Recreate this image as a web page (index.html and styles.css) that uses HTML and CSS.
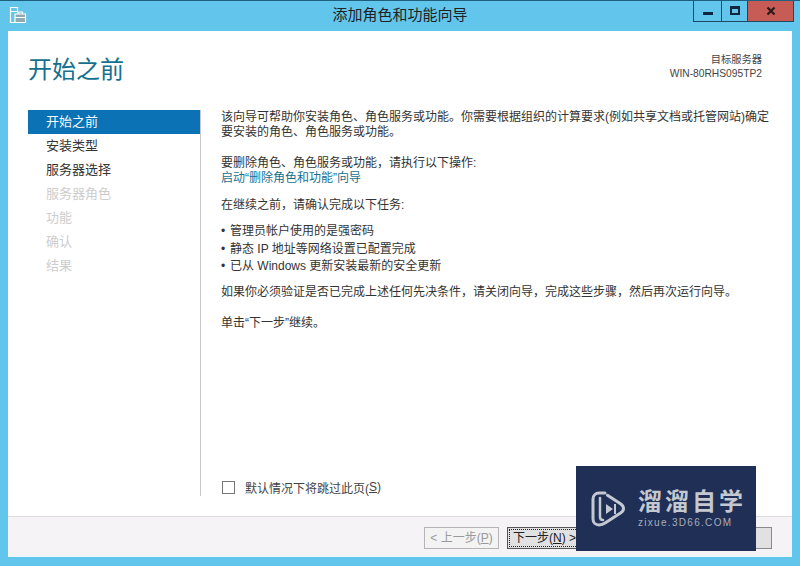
FILE: index.html
```html
<!DOCTYPE html>
<html lang="zh-CN">
<head>
  <meta charset="UTF-8">
  <meta name="viewport" content="width=800, initial-scale=1.0">
  <title>添加角色和功能向导</title>
  <link rel="stylesheet" href="styles.css">
</head>
<body>
  <div class="window">
    <div class="titlebar">
      <svg class="app-icon" width="18" height="18" viewBox="0 0 18 18">
        <path d="M1.500 1.500h7v4h-7zM1.500 5.500v11h5" fill="none" stroke="#fff" stroke-width="1.200"/>
        <path d="M6 8h10.500v8.500h-10.500z" fill="#8fa9b0" stroke="#fff" stroke-width="1.200"/>
        <path d="M9 8V6h4.500v2M6 11.500h10.500" fill="none" stroke="#fff" stroke-width="1.200"/>
      </svg>
      <div class="title">添加角色和功能向导</div>
      <div class="controls">
        <div class="ctl ctl-first"><span class="ctl-min"></span></div>
        <div class="ctl"><span class="ctl-max"></span></div>
        <div class="ctl ctl-close">
          <svg width="10" height="10" viewBox="0 0 10 10"><path d="M1.500 1.500l7 7M8.500 1.500l-7 7" stroke="#2b1a1a" stroke-width="2.200" fill="none"/></svg>
        </div>
      </div>
    </div>

    <div class="client">
      <div class="head">
        <h1>开始之前</h1>
        <div class="server">
          <div>目标服务器</div>
          <div>WIN-80RHS095TP2</div>
        </div>
      </div>

      <div class="main">
        <ul class="steps">
          <li class="active">开始之前</li>
          <li>安装类型</li>
          <li>服务器选择</li>
          <li class="off">服务器角色</li>
          <li class="off">功能</li>
          <li class="off">确认</li>
          <li class="off">结果</li>
        </ul>

        <div class="content">
          <div class="body-text">
            <p class="p1">该向导可帮助你安装角色、角色服务或功能。你需要根据组织的计算要求(例如共享文档或托管网站)确定要安装的角色、角色服务或功能。</p>
            <p class="p2">要删除角色、角色服务或功能，请执行以下操作:<br><a href="#">启动“删除角色和功能”向导</a></p>
            <p class="p3">在继续之前，请确认完成以下任务:</p>
            <ul class="tasks">
              <li>管理员帐户使用的是强密码</li>
              <li>静态 IP 地址等网络设置已配置完成</li>
              <li>已从 Windows 更新安装最新的安全更新</li>
            </ul>
            <p class="p4">如果你必须验证是否已完成上述任何先决条件，请关闭向导，完成这些步骤，然后再次运行向导。</p>
            <p class="p5">单击“下一步”继续。</p>
          </div>
          <label class="skip"><span class="box"></span>默认情况下将跳过此页(<u>S</u>)</label>
        </div>
      </div>

      <div class="footer">
        <button class="btn" disabled>&lt; 上一步(<u>P</u>)</button>
        <button class="btn btn-next">下一步(<u>N</u>) &gt;</button>
        <button class="btn btn-plain" disabled></button>
        <button class="btn btn-plain btn-last" disabled></button>
      </div>
    </div>

    <div class="mark">
      <svg class="mark-logo" width="35" height="36" viewBox="0 0 35 36">
        <path d="M14 2h-6c-3.500 0-6 2.500-6 6v20c0 3.500 2.500 6 6 6 2.500 0 4.500-.8 6.500-2.200l15-9.800c4-2.700 4-6.500 0-9.200l-13-8.500" fill="none" stroke="#c4c8d0" stroke-width="3" stroke-linecap="round"/>
        <path d="M9 7v19c0 2 1 3 3 3" fill="none" stroke="#c4c8d0" stroke-width="2.500" stroke-linecap="round"/>
        <path d="M15 13l7 5-7 5zM23 13h2v10h-2z" fill="#c4c8d0"/>
      </svg>
      <div class="mark-text">
        <div class="mark-cn">溜溜自学</div>
        <div class="mark-url">zixue.3D66.COM</div>
      </div>
    </div>
  </div>
</body>
</html>
```

FILE: styles.css
```css
body {
  margin: 0;
  font-family: "Liberation Sans", "Noto Sans CJK SC", sans-serif;
  font-size: 12px;
  color: #333;
}
.window {
  position: relative;
  width: 800px;
  height: 566px;
  background: #62c5eb;
  overflow: hidden;
  box-sizing: border-box;
  border-top: 1px solid #1d5f7c;
  padding: 0 8px 9px;
  display: flex;
  flex-direction: column;
}
.titlebar {
  height: 30px;
  flex: none;
  position: relative;
  margin: 0 -8px;
  display: flex;
}
.app-icon {
  margin: 5px 0 0 9px;
}
.title {
  position: absolute;
  left: 0;
  right: 0;
  top: 4px;
  text-align: center;
  font-size: 15px;
  line-height: 20px;
  color: #222;
}
.controls {
  position: absolute;
  top: -1px;
  left: 693px;
  display: flex;
  height: 22px;
  border: 1px solid #1d4a63;
  border-top: none;
  box-sizing: border-box;
  width: 101px;
}
.ctl {
  width: 25px;
  display: flex;
  align-items: center;
  justify-content: center;
  border-right: 1px solid #1d4a63;
}
.ctl-first {
  width: 27px;
}
.ctl-close {
  flex: 1;
  border-right: none;
  background: #c75b56;
}
.ctl-min {
  width: 10px;
  height: 3px;
  background: #10263f;
  margin-top: 5px;
}
.ctl-max {
  width: 6px;
  height: 4px;
  border: 2px solid #10263f;
  border-top-width: 3px;
}
.client {
  flex: 1;
  background: #fff;
  display: flex;
  flex-direction: column;
  min-height: 0;
}
.head {
  height: 79px;
  flex: none;
  display: flex;
  justify-content: space-between;
  padding: 0 30px 0 20px;
}
h1 {
  margin: 19px 0 0;
  font-size: 24px;
  line-height: 40px;
  font-weight: normal;
  color: #15708f;
}
.server {
  margin-top: 22px;
  text-align: right;
  font-size: 10.250px;
  line-height: 14px;
  color: #444;
}
.main {
  flex: 1;
  display: flex;
  min-height: 0;
}
.steps {
  list-style: none;
  margin: 0 0 20px 20px;
  padding: 0;
  width: 172px;
  border-right: 1px solid #c8c8c8;
  font-size: 13px;
  color: #333;
}
.steps li {
  height: 24px;
  line-height: 24px;
  padding-left: 18px;
}
.steps .active {
  background: #0b72b5;
  color: #f2f8fc;
}
.steps .off {
  color: #cdcdcd;
}
.content {
  flex: 1;
  padding: 0 22px 0 20px;
  display: flex;
  flex-direction: column;
  min-width: 0;
}
.body-text {
  flex: 1;
  line-height: 15px;
}
.body-text p {
  margin: 0;
}
.p2 {
  margin-top: 16px !important;
}
.p2 a {
  color: #15708f;
  text-decoration: none;
}
.p3 {
  margin-top: 12px !important;
}
.tasks {
  list-style: none;
  margin: 10px 0 0;
  padding: 0;
  line-height: 17.500px;
}
.tasks li::before {
  content: "•";
  display: inline-block;
  width: 9px;
}
.p4 {
  margin-top: 9px !important;
}
.p5 {
  margin-top: 16px !important;
}
.skip {
  display: flex;
  align-items: center;
  height: 20px;
  margin-bottom: 19px;
  margin-left: 1px;
  color: #444;
}
.box {
  width: 11px;
  height: 11px;
  border: 1px solid #777;
  margin-right: 10px;
  background: #fff;
}
.footer {
  height: 41px;
  flex: none;
  box-sizing: border-box;
  background: #f5f3f5;
  border-top: 1px solid #dedcde;
  border-bottom: 2px solid #edf7fb;
  padding: 10px 20px 0 0;
  display: flex;
  justify-content: flex-end;
  align-items: flex-start;
  gap: 8px;
}
.btn {
  width: 75px;
  height: 22px;
  padding: 0;
  font: inherit;
  font-size: 12px;
  line-height: 18px;
  background: #f3f3f3;
  border: 1px solid #b5b5b5;
  color: #9a9a9a;
}
.btn-next {
  color: #222;
  background: #e1e1e1;
  border-color: #555;
  outline: 1px dotted #222;
  outline-offset: -3px;
}
.btn-plain {
  background: #e1e1e1;
  border-color: #8a8a8a;
}
.btn-last {
  margin-left: 24px;
}
/* watermark sits over the footer buttons */
.mark {
  position: absolute;
  left: 576px;
  top: 465px;
  width: 180px;
  height: 85px;
  background: #1f2f55;
  display: flex;
  align-items: center;
  gap: 12px;
  padding: 0 0 0 15px;
  box-sizing: border-box;
}
.mark-cn {
  font-size: 24px;
  line-height: 26px;
  letter-spacing: 3px;
  color: #c4c8d0;
  font-weight: bold;
  white-space: nowrap;
}
.mark-url {
  font-size: 10px;
  line-height: 12px;
  letter-spacing: 1.300px;
  color: #a9aebb;
  margin-top: 2px;
  white-space: nowrap;
}
```
